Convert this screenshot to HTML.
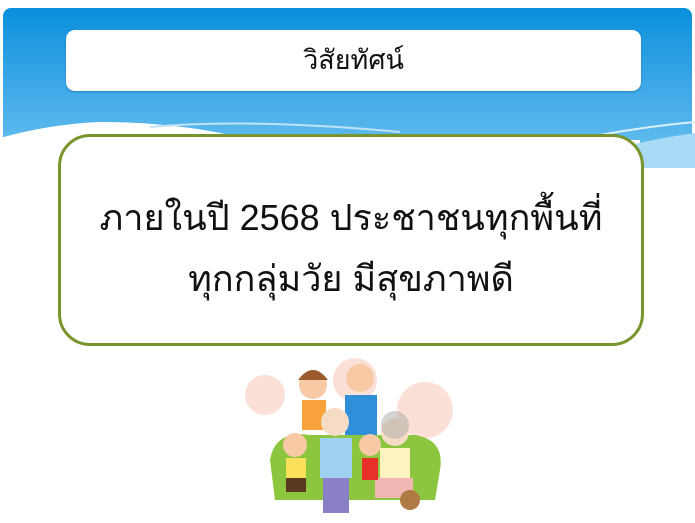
<!DOCTYPE html>
<html><head><meta charset="utf-8"><style>
body{margin:0;width:695px;height:523px;background:#fff;position:relative;overflow:hidden;font-family:"Liberation Sans","Noto Sans CJK SC",sans-serif}
.hdr{position:absolute;left:3px;top:8px;width:689px;height:160px;border-radius:8px 8px 0 0;background:linear-gradient(#0a8fdc,#3fa9e8 50%,#6cc2ef)}
.t{position:absolute;left:66px;top:30px;width:575px;height:61px;background:#fff;border-radius:9px;box-shadow:0 1px 2px #2a7fb8;text-align:center;line-height:61px;font-size:27px;color:#111}
.m{position:absolute;left:58px;top:134px;width:580px;height:206px;border:3px solid #77952c;border-radius:32px;background:#fff;text-align:center;font-size:36px;color:#111}
</style></head><body>
<div class="hdr"></div>
<svg style="position:absolute;left:0;top:0" width="695" height="200">
<path d="M0 138 Q50 124 100 122 Q170 122 230 135 L640 140 L640 200 L0 200Z" fill="#fff"/>
<path d="M150 127 Q250 118 400 132" stroke="#bfe3f7" stroke-width="2" fill="none"/>
<path d="M600 135 Q650 126 695 122" stroke="#d8effa" stroke-width="2" fill="none"/>
<path d="M630 145 Q660 138 695 133 L695 168 L630 168Z" fill="#a9dbf6"/>
</svg>
<div class="t">วิสัยทัศน์</div>
<div class="m"><div style="position:absolute;top:52px;width:100%">ภายในปี 2568 ประชาชนทุกพื้นที่</div><div style="position:absolute;top:113px;width:100%">ทุกกลุ่มวัย มีสุขภาพดี</div></div>
<svg style="position:absolute;left:230px;top:350px" width="240" height="173">
<circle cx="35" cy="45" r="20" fill="#fbe0d8"/><circle cx="195" cy="60" r="28" fill="#fbe0d8"/><circle cx="125" cy="30" r="22" fill="#fbe0d8"/>
<path d="M40 110 Q45 80 80 85 L185 85 Q215 90 210 120 L205 150 L45 150Z" fill="#8cc63f"/>
<circle cx="83" cy="35" r="14" fill="#f7c9a5"/><path d="M68 30 Q83 10 98 30" fill="#9b5a2b"/>
<rect x="72" y="50" width="24" height="30" fill="#f7a23b"/>
<circle cx="130" cy="28" r="14" fill="#f7c9a5"/><rect x="115" y="45" width="32" height="40" fill="#2f8fd8"/>
<circle cx="105" cy="72" r="14" fill="#f7dcc5"/><rect x="90" y="88" width="32" height="40" fill="#9fd1f2"/><rect x="93" y="128" width="26" height="35" fill="#8a80c8"/>
<circle cx="165" cy="82" r="14" fill="#f7dcc5"/><circle cx="165" cy="75" r="14" fill="#aaa" fill-opacity=".5"/><rect x="150" y="98" width="30" height="30" fill="#fcf3c0"/><rect x="145" y="128" width="38" height="20" fill="#f2b7b3"/>
<circle cx="140" cy="95" r="11" fill="#f7c9a5"/><rect x="132" y="108" width="16" height="22" fill="#e8302b"/>
<circle cx="65" cy="95" r="12" fill="#f7c9a5"/><rect x="56" y="108" width="20" height="20" fill="#fde15a"/><rect x="56" y="128" width="20" height="14" fill="#5a3a1e"/>
<circle cx="180" cy="150" r="10" fill="#b07a45"/>
</svg>
</body></html>
